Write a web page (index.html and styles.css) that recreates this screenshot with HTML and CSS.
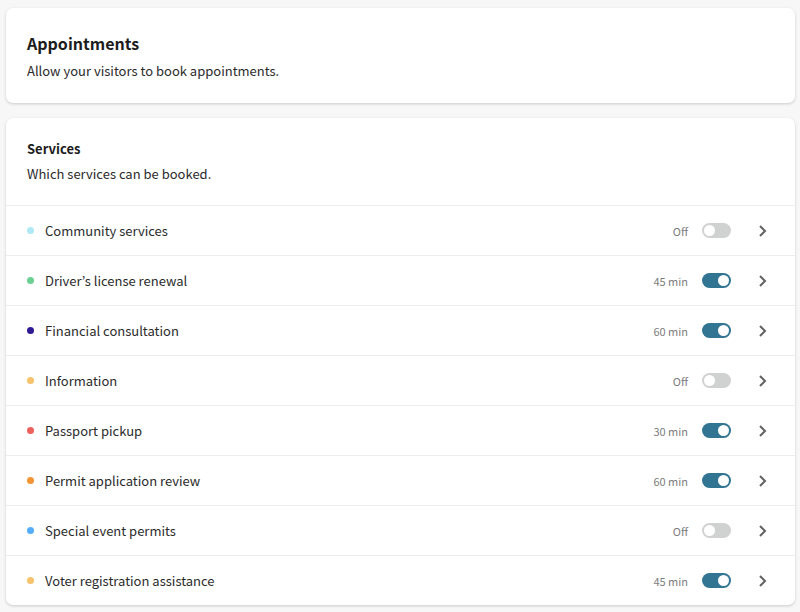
FILE: index.html
```
<!DOCTYPE html>
<html lang="en">

<head>
    <meta charset="UTF-8">
    <meta name="viewport" content="width=device-width, initial-scale=1.0">
    <title>Appointments</title>
    <link rel="stylesheet" href="styles.css">
</head>

<body>
    <main>
        <section class="card intro">
            <h1>Appointments</h1>
            <p>Allow your visitors to book appointments.</p>
        </section>

        <section class="card">
            <header class="services-header">
                <h2>Services</h2>
                <p>Which services can be booked.</p>
            </header>

            <ul class="services">
                <li class="service">
                    <span class="dot cyan"></span>
                    <label class="name" for="community">Community services</label>
                    <span class="duration">Off</span>
                    <input class="toggle" type="checkbox" id="community">
                    <button class="open" type="button" aria-label="Edit Community services">
                        <svg viewBox="0 0 8 12"><path d="M1 1l5 5-5 5" /></svg>
                    </button>
                </li>
                <li class="service">
                    <span class="dot green"></span>
                    <label class="name" for="license">Driver’s license renewal</label>
                    <span class="duration">45 min</span>
                    <input class="toggle" type="checkbox" id="license" checked>
                    <button class="open" type="button" aria-label="Edit Driver’s license renewal">
                        <svg viewBox="0 0 8 12"><path d="M1 1l5 5-5 5" /></svg>
                    </button>
                </li>
                <li class="service">
                    <span class="dot indigo"></span>
                    <label class="name" for="financial">Financial consultation</label>
                    <span class="duration">60 min</span>
                    <input class="toggle" type="checkbox" id="financial" checked>
                    <button class="open" type="button" aria-label="Edit Financial consultation">
                        <svg viewBox="0 0 8 12"><path d="M1 1l5 5-5 5" /></svg>
                    </button>
                </li>
                <li class="service">
                    <span class="dot yellow"></span>
                    <label class="name" for="information">Information</label>
                    <span class="duration">Off</span>
                    <input class="toggle" type="checkbox" id="information">
                    <button class="open" type="button" aria-label="Edit Information">
                        <svg viewBox="0 0 8 12"><path d="M1 1l5 5-5 5" /></svg>
                    </button>
                </li>
                <li class="service">
                    <span class="dot red"></span>
                    <label class="name" for="passport">Passport pickup</label>
                    <span class="duration">30 min</span>
                    <input class="toggle" type="checkbox" id="passport" checked>
                    <button class="open" type="button" aria-label="Edit Passport pickup">
                        <svg viewBox="0 0 8 12"><path d="M1 1l5 5-5 5" /></svg>
                    </button>
                </li>
                <li class="service">
                    <span class="dot orange"></span>
                    <label class="name" for="permit">Permit application review</label>
                    <span class="duration">60 min</span>
                    <input class="toggle" type="checkbox" id="permit" checked>
                    <button class="open" type="button" aria-label="Edit Permit application review">
                        <svg viewBox="0 0 8 12"><path d="M1 1l5 5-5 5" /></svg>
                    </button>
                </li>
                <li class="service">
                    <span class="dot blue"></span>
                    <label class="name" for="event">Special event permits</label>
                    <span class="duration">Off</span>
                    <input class="toggle" type="checkbox" id="event">
                    <button class="open" type="button" aria-label="Edit Special event permits">
                        <svg viewBox="0 0 8 12"><path d="M1 1l5 5-5 5" /></svg>
                    </button>
                </li>
                <li class="service">
                    <span class="dot yellow"></span>
                    <label class="name" for="voter">Voter registration assistance</label>
                    <span class="duration">45 min</span>
                    <input class="toggle" type="checkbox" id="voter" checked>
                    <button class="open" type="button" aria-label="Edit Voter registration assistance">
                        <svg viewBox="0 0 8 12"><path d="M1 1l5 5-5 5" /></svg>
                    </button>
                </li>
            </ul>
        </section>
    </main>
</body>

</html>
```

FILE: styles.css
```
* {
    box-sizing: border-box;
}

body {
    font-family: "Noto Sans CJK KR", "Noto Sans", sans-serif;
    font-size: 13px;
    line-height: 20px;
    margin: 0;
    background-color: #f7f7f7;
    color: #2b2b2b;
}

main {
    display: flex;
    flex-direction: column;
    gap: 15px;
    padding: 8px 5px 7px 6px;
}

h1,
h2,
p {
    margin: 0;
}

h1 {
    font-size: 16px;
    line-height: 24px;
    color: #1c1c1c;
}

h2 {
    font-size: 13px;
    line-height: 20px;
    color: #1c1c1c;
}

.card {
    background: #fff;
    border-radius: 7px;
    box-shadow: 0 1px 3px rgba(0, 0, 0, 0.18);
}

.intro {
    padding: 23px 21px 22px;
}

.intro p {
    margin-top: 6px;
}

.services-header {
    padding: 21px 21px 21px;
}

.services-header p {
    margin-top: 5px;
}

.services {
    list-style: none;
    margin: 0;
    padding: 0;
}

.service {
    display: flex;
    align-items: center;
    border-top: 1px solid #ededed;
    padding: 0 24px 0 21px;
    min-height: 50px;
}

.dot {
    width: 7px;
    height: 7px;
    border-radius: 50%;
    margin-right: 11px;
}

.cyan {
    background: #aee8f5;
}

.green {
    background: #6bd193;
}

.indigo {
    background: #2e1a95;
}

.yellow {
    background: #f6c26b;
}

.red {
    background: #ee605c;
}

.orange {
    background: #f39433;
}

.blue {
    background: #55adfa;
}

.name {
    flex: 1;
}

.duration {
    font-size: 11px;
    color: #7c7c7c;
    margin-right: 14px;
}

.toggle {
    appearance: none;
    display: flex;
    width: 29px;
    height: 15px;
    margin: 0 24px 0 0;
    padding: 2px;
    border-radius: 8px;
    background: #d0d2d1;
    cursor: pointer;
}

.toggle::before {
    content: "";
    width: 11px;
    height: 11px;
    border-radius: 50%;
    background: #fff;
}

.toggle:checked {
    justify-content: flex-end;
    background: #317593;
}

.open {
    display: flex;
    justify-content: center;
    width: 16px;
    padding: 4px;
    border: none;
    background: none;
    cursor: pointer;
}

.open svg {
    width: 8px;
    height: 12px;
    fill: none;
    stroke: #636363;
    stroke-width: 2;
}
```
